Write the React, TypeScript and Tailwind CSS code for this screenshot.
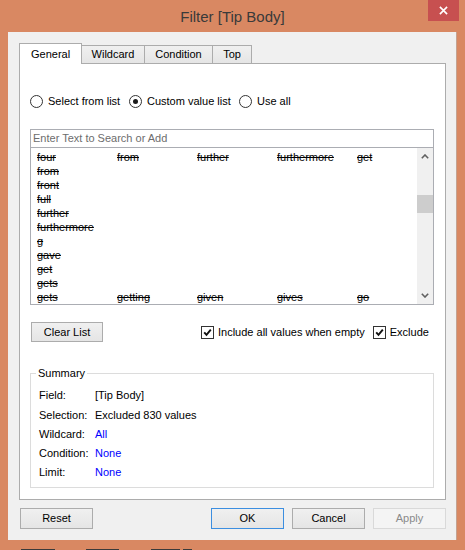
import React from "react";

const ui = "font-['Liberation_Sans',Arial,sans-serif]";

const listRows: string[][] = [
  ["four", "from", "further", "furthermore", "get"],
  ["from"],
  ["front"],
  ["full"],
  ["further"],
  ["furthermore"],
  ["g"],
  ["gave"],
  ["get"],
  ["gets"],
  ["gets", "getting", "given", "gives", "go"],
];

const summary = [
  { label: "Field:", value: "[Tip Body]", blue: false },
  { label: "Selection:", value: "Excluded 830 values", blue: false },
  { label: "Wildcard:", value: "All", blue: true },
  { label: "Condition:", value: "None", blue: true },
  { label: "Limit:", value: "None", blue: true },
];

function Radio({ checked, label, width }: { checked?: boolean; label: string; width: string }) {
  return (
    <div className={"flex items-center " + width}>
      <span className="flex h-[13px] w-[13px] items-center justify-center rounded-full border border-[#333] bg-white">
        {checked && <span className="h-[5px] w-[5px] rounded-full bg-[#1a1a1a]" />}
      </span>
      <span className="ml-[5px]">{label}</span>
    </div>
  );
}

function Check({ label, className }: { label: string; className?: string }) {
  return (
    <div className={"flex items-center " + (className ?? "")}>
      <span className="flex h-[13px] w-[13px] items-center justify-center border border-[#333] bg-white">
        <svg viewBox="0 0 11 11" className="h-[11px] w-[11px]">
          <path d="M2.2 5.3 L4.5 7.8 L8.8 2.6" stroke="#111" strokeWidth="1.9" fill="none" />
        </svg>
      </span>
      <span className="ml-[4px]">{label}</span>
    </div>
  );
}

function Button({ label, className, disabled, focused }: { label: string; className?: string; disabled?: boolean; focused?: boolean }) {
  let look = "border-[#acacac] bg-gradient-to-b from-[#f0f0f0] to-[#e5e5e5] text-black";
  if (focused) look = "border-[#3c8ee0] bg-gradient-to-b from-[#f0f0f0] to-[#e5e5e5] text-black";
  if (disabled) look = "border-[#d9d9d9] bg-[#f4f4f4] text-[#8a8a8a]";
  return (
    <div className={"flex h-[21px] w-[73px] items-center justify-center border " + look + " " + (className ?? "")}>
      {label}
    </div>
  );
}

function Chevron({ down }: { down?: boolean }) {
  return (
    <svg viewBox="0 0 8 5" className="h-[5px] w-[8px]">
      <path d={down ? "M0.8 0.8 L4 4 L7.2 0.8" : "M0.8 4.2 L4 1 L7.2 4.2"} stroke="#606060" strokeWidth="1.6" fill="none" />
    </svg>
  );
}

export default function App() {
  return (
    <div className={"flex h-[550px] w-[465px] flex-col bg-[#d98862] text-[11px] text-black " + ui}>
      {/* title bar */}
      <div className="grid h-[32px] shrink-0">
        <div className="col-start-1 row-start-1 self-center justify-self-center pt-[2px] text-[15px] text-[#3a3a3a]">
          Filter [Tip Body]
        </div>
        <div className="col-start-1 row-start-1 mr-[6px] flex h-[21px] w-[31px] items-center justify-center self-start justify-self-end bg-[#c75050]">
          <svg viewBox="0 0 10 10" className="h-[9px] w-[9px]">
            <path d="M1 1 L9 9 M9 1 L1 9" stroke="#fff" strokeWidth="1.8" />
          </svg>
        </div>
      </div>

      {/* client area */}
      <div className="ml-[8px] flex h-[508px] w-[449px] shrink-0 flex-col border-r border-[#c4a290] bg-[#f0f0f0] pt-[11px]">
        {/* tabs */}
        <div className="ml-[11px] flex h-[21px] items-end">
          <div className="relative z-10 flex h-[21px] w-[63px] items-center border border-b-0 border-[#acacac] bg-white pl-[11px]">
            General
          </div>
          <div className="flex h-[19px] w-[63px] items-center justify-center border border-l-0 border-[#acacac] bg-gradient-to-b from-[#f0f0f0] to-[#e5e5e5]">
            Wildcard
          </div>
          <div className="flex h-[19px] w-[68px] items-center justify-center border border-l-0 border-[#acacac] bg-gradient-to-b from-[#f0f0f0] to-[#e5e5e5]">
            Condition
          </div>
          <div className="flex h-[19px] w-[39px] items-center justify-center border border-l-0 border-[#acacac] bg-gradient-to-b from-[#f0f0f0] to-[#e5e5e5]">
            Top
          </div>
        </div>

        {/* panel */}
        <div className="-mt-px ml-[11px] flex h-[437px] w-[427px] flex-col border border-[#acacac] bg-white pl-[10px] pt-[29px]">
          <div className="flex h-[16px] items-center">
            <Radio label="Select from list" width="w-[99px]" />
            <Radio label="Custom value list" width="w-[110px]" checked />
            <Radio label="Use all" width="w-[80px]" />
          </div>

          <div className="mt-[20px] w-[404px] border border-[#abadb3] bg-white">
            <div className="flex h-[18px] items-center border-b border-[#abadb3] pl-[2px] text-[#6d6d6d]">
              Enter Text to Search or Add
            </div>
            <div className="flex h-[156px]">
              <div className="flex-1 overflow-hidden pl-[6px] pt-[2px]">
                {listRows.map((row, i) => (
                  <div key={i} className="flex h-[14px] items-center">
                    {row.map((w, j) => (
                      <span key={j} className="w-[80px] shrink-0 leading-[14px] line-through">
                        {w}
                      </span>
                    ))}
                  </div>
                ))}
              </div>
              <div className="flex w-[16px] flex-col bg-[#f0f0f0]">
                <div className="flex h-[17px] items-center justify-center">
                  <Chevron />
                </div>
                <div className="h-[30px]" />
                <div className="h-[18px] bg-[#cdcdcd]" />
                <div className="flex-1" />
                <div className="flex h-[17px] items-center justify-center">
                  <Chevron down />
                </div>
              </div>
            </div>
          </div>

          <div className="mt-[17px] flex h-[20px] items-center">
            <div className="ml-px flex h-[20px] w-[72px] items-center justify-center border border-[#acacac] bg-gradient-to-b from-[#f0f0f0] to-[#e5e5e5]">
              Clear List
            </div>
            <Check label="Include all values when empty" className="ml-[98px]" />
            <Check label="Exclude" className="ml-[8px]" />
          </div>

          <fieldset className="mt-[24px] w-[404px] border border-[#dcdcdc] pb-[5px]">
            <legend className="ml-[5px] px-[2px] leading-[14px]">Summary</legend>
            <div className="pl-[8px] pt-[6px]">
              {summary.map((s) => (
                <div key={s.label} className="flex h-[19.25px] items-center">
                  <span className="w-[56px]">{s.label}</span>
                  <span className={s.blue ? "text-[#0000ff]" : ""}>{s.value}</span>
                </div>
              ))}
            </div>
          </fieldset>
        </div>

        {/* footer buttons */}
        <div className="mt-[8px] flex">
          <Button label="Reset" className="ml-[12px]" />
          <Button label="OK" className="ml-auto" focused />
          <Button label="Cancel" className="ml-[8px]" />
          <Button label="Apply" className="ml-[8px] mr-[10px]" disabled />
        </div>
      </div>

      <div className="h-px w-[465px] shrink-0" />
      <div className="flex flex-1 items-end">
        <div className="ml-[21px] h-px w-[34px] bg-[#3a3a3a]" />
        <div className="ml-[31px] h-px w-[33px] bg-[#3a3a3a]" />
        <div className="ml-[32px] h-px w-[29px] bg-[#3a3a3a]" />
        <div className="ml-[3px] h-px w-[9px] bg-[#3a3a3a]" />
      </div>
    </div>
  );
}
